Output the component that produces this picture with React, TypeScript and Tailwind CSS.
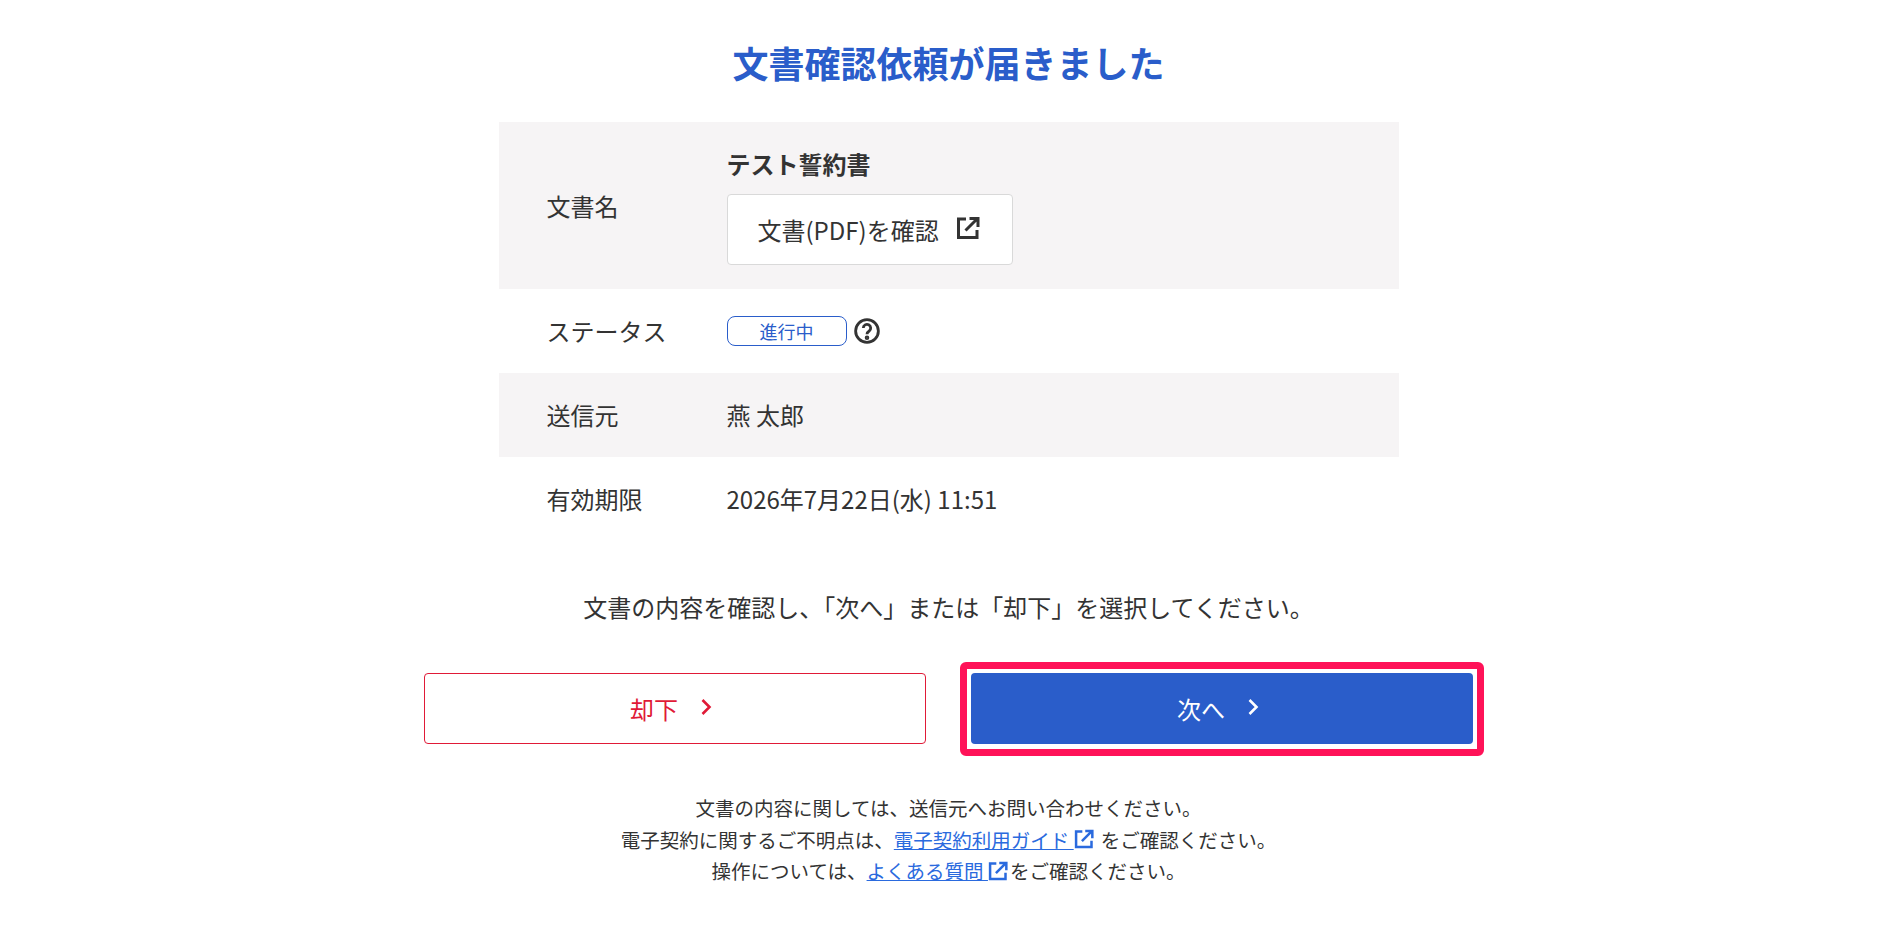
import React from 'react';

const ExternalIcon: React.FC<{ className?: string }> = ({ className }) => (
  <svg viewBox="0 0 24 24" fill="none" stroke="currentColor" strokeWidth="3" className={className}>
    <path d="M10 3H2.5v18.5H21V14" />
    <path d="M9.5 14.5L20.5 3.5M13.5 2.5h8.5v8.5" />
  </svg>
);

const Chevron: React.FC<{ className?: string }> = ({ className }) => (
  <svg viewBox="0 0 12 18" fill="none" stroke="currentColor" strokeWidth="2.6" className={className}>
    <path d="M2.5 2l7 7-7 7" />
  </svg>
);

const Row: React.FC<{ label: string; shaded?: boolean; children: React.ReactNode }> = ({ label, shaded, children }) => (
  <div className={`flex items-center px-12 ${shaded ? 'bg-[#f6f4f5]' : ''}`}>
    <div className="w-[180px] shrink-0">{label}</div>
    <div>{children}</div>
  </div>
);

export default function App() {
  return (
    <div
      className="min-h-[950px] bg-white pl-[5px] text-[24px] leading-[36px] text-[#333333]"
      style={{ fontFamily: '"Noto Sans CJK JP", "Noto Sans", sans-serif' }}
    >
      <main className="mx-auto flex w-[1050px] flex-col items-center">
        <h1 className="mt-[35px] text-[36px] leading-[54px] font-bold text-[#2a5dca]">
          文書確認依頼が届きました
        </h1>
        <section className="mt-[33px] flex w-[900px] flex-col">
          <Row label="文書名" shaded>
            <div className="flex h-[167px] flex-col justify-center">
              <div className="font-bold">テスト誓約書</div>
              <button
                type="button"
                className="mt-[12px] flex h-[71px] w-[286px] items-center rounded-[4px] border border-[#d9d9d9] bg-white pl-[30px]"
              >
                文書(PDF)を確認
                <ExternalIcon className="ml-[17px] h-[24px] w-[24px] -translate-y-[2px]" />
              </button>
            </div>
          </Row>
          <Row label="ステータス">
            <div className="flex h-[84px] items-center">
              <span className="flex h-[30px] w-[120px] items-center justify-center rounded-[8px] border border-[#2a5dca] text-[18px] text-[#2a5dca]">
                進行中
              </span>
              <svg viewBox="0 0 24 24" fill="none" stroke="currentColor" strokeWidth="2.6" className="ml-[7px] h-[26px] w-[26px]">
                <circle cx="12" cy="12" r="10.5" />
                <path d="M8.6 9.2a3.4 3.4 0 1 1 5.4 2.8c-1.3.9-2 1.5-2 3" />
                <circle cx="12" cy="18.2" r="0.8" fill="currentColor" />
              </svg>
            </div>
          </Row>
          <Row label="送信元" shaded>
            <div className="flex h-[84px] items-center">燕 太郎</div>
          </Row>
          <Row label="有効期限">
            <div className="flex h-[84px] items-center">2026年7月22日(水) 11:51</div>
          </Row>
        </section>
        <p className="mt-[48px]">文書の内容を確認し、「次へ」または「却下」を選択してください。</p>
        <div className="mt-[48px] flex w-[1049px] items-start justify-between">
          <button
            type="button"
            className="flex h-[71px] w-[502px] items-center justify-center gap-[22px] rounded-[4px] border border-[#e01a37] bg-white pr-[8px] text-[#e01a37]"
          >
            却下
            <Chevron className="h-[18px] w-[12px] -translate-y-[2px]" />
          </button>
          <div className="-mt-[11px] -mr-[11px] -mb-[12px] rounded-[6px] border-[7px] border-[#ff1258] px-[4px] pt-[4px] pb-[5px]">
            <button
              type="button"
              className="flex h-[71px] w-[502px] items-center justify-center gap-[22px] rounded-[4px] bg-[#2a5dca] pr-[8px] text-white"
            >
              次へ
              <Chevron className="h-[18px] w-[12px] -translate-y-[2px]" />
            </button>
          </div>
        </div>
        <div className="mt-[48px] text-center text-[19.5px] leading-[31.5px]">
          <p>文書の内容に関しては、送信元へお問い合わせください。</p>
          <p>
            電子契約に関するご不明点は、
            <a className="text-[#2a6ade] underline">電子契約利用ガイド&nbsp;</a>
            <ExternalIcon className="mr-[7px] inline h-[20px] w-[20px] -translate-y-[3px] text-[#2a6ade]" />
            をご確認ください。
          </p>
          <p>
            操作については、
            <a className="text-[#2a6ade] underline">よくある質問&nbsp;</a>
            <ExternalIcon className="mr-[2px] inline h-[20px] w-[20px] -translate-y-[3px] text-[#2a6ade]" />
            をご確認ください。
          </p>
        </div>
      </main>
    </div>
  );
}
